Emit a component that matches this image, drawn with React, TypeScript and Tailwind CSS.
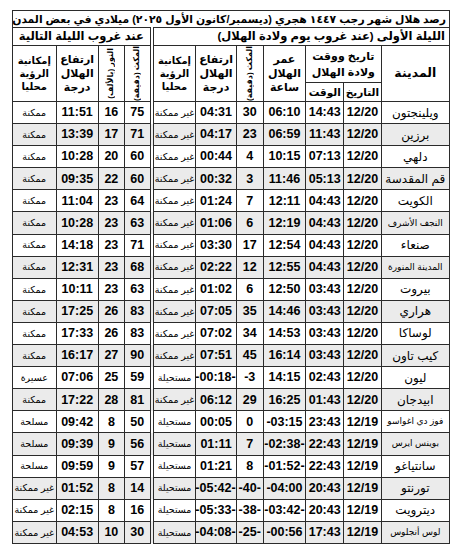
const ROWS: string[][] = [
  ["ويلينجتون", "12/20", "14:43", "06:10", "30", "04:31", "غير ممكنة", "75", "16", "11:51", "ممكنة"],
  ["برزين", "12/20", "11:43", "06:59", "23", "04:17", "غير ممكنة", "71", "17", "13:39", "ممكنة"],
  ["دلهي", "12/20", "07:13", "10:15", "4", "00:44", "غير ممكنة", "60", "20", "10:28", "ممكنة"],
  ["قم المقدسة", "12/20", "05:13", "11:46", "3", "00:32", "غير ممكنة", "60", "22", "09:35", "ممكنة"],
  ["الكويت", "12/20", "04:43", "12:11", "7", "01:24", "غير ممكنة", "64", "23", "11:04", "ممكنة"],
  ["النجف الأشرف", "12/20", "04:43", "12:19", "6", "01:06", "غير ممكنة", "63", "23", "10:28", "ممكنة"],
  ["صنعاء", "12/20", "04:43", "12:54", "17", "03:30", "غير ممكنة", "71", "23", "14:18", "ممكنة"],
  ["المدينة المنورة", "12/20", "04:43", "12:55", "12", "02:22", "غير ممكنة", "68", "23", "12:31", "ممكنة"],
  ["بيروت", "12/20", "03:43", "12:50", "6", "01:02", "غير ممكنة", "63", "23", "10:11", "ممكنة"],
  ["هراري", "12/20", "03:43", "14:46", "35", "07:05", "غير ممكنة", "83", "26", "17:25", "ممكنة"],
  ["لوساكا", "12/20", "03:43", "14:53", "34", "07:02", "غير ممكنة", "83", "26", "17:33", "ممكنة"],
  ["كيب تاون", "12/20", "03:43", "16:14", "45", "07:51", "غير ممكنة", "90", "27", "16:17", "ممكنة"],
  ["ليون", "12/20", "02:43", "14:15", "-3", "-00:18-", "مستحيلة", "59", "25", "07:06", "عسيرة"],
  ["ابيدجان", "12/20", "01:43", "16:25", "29", "06:12", "غير ممكنة", "81", "28", "17:22", "ممكنة"],
  ["فوز دي اغواسو", "12/19", "23:43", "-03:15", "0", "00:05", "مستحيلة", "50", "8", "09:42", "مسلحة"],
  ["بوينس ايرس", "12/19", "22:43", "-02:38-", "7", "01:11", "مستحيلة", "56", "9", "09:39", "مسلحة"],
  ["سانتياغو", "12/19", "22:43", "-01:52-", "8", "01:21", "مستحيلة", "57", "9", "09:59", "مسلحة"],
  ["تورنتو", "12/19", "20:43", "-04:00", "-40-", "-05:42-", "مستحيلة", "14", "8", "01:52", "غير ممكنة"],
  ["ديترويت", "12/19", "20:43", "-03:42-", "-38-", "-05:33-", "مستحيلة", "16", "8", "02:15", "غير ممكنة"],
  ["لوس أنجلوس", "12/19", "17:43", "-00:56", "-25-", "-04:08-", "مستحيلة", "30", "10", "04:53", "غير ممكنة"],
];

const SMALL = new Set(["النجف الأشرف", "المدينة المنورة", "فوز دي اغواسو", "بوينس ايرس", "لوس أنجلوس"]);

const cell = "border border-[#2b2b2b] text-center p-0 align-middle";

const Vertical = ({ text }: { text: string }) => (
  <div className="mx-auto flex justify-center">
    <span className="[writing-mode:vertical-rl] rotate-180 text-[8px] font-bold whitespace-nowrap leading-none">
      {text}
    </span>
  </div>
);

const ThreeLine = ({ a, b, c }: { a: string; b: string; c: string }) => (
  <div className="flex flex-col items-center gap-[3px] leading-none">
    <span>{a}</span>
    <span>{b}</span>
    <span>{c}</span>
  </div>
);

export default function App() {
  return (
    <div
      className="w-[457px] h-[556px] bg-white pt-[10px] pl-[12px] text-black"
      style={{ fontFamily: '"Liberation Sans", "DejaVu Sans", sans-serif' }}
    >
      <table dir="rtl" className="border-collapse table-fixed w-[438px]">
        <colgroup>
          <col className="w-[68px]" />
          <col className="w-[37px]" />
          <col className="w-[38px]" />
          <col className="w-[42px]" />
          <col className="w-[27px]" />
          <col className="w-[40px]" />
          <col className="w-[44px]" />
          <col className="w-[27px]" />
          <col className="w-[26px]" />
          <col className="w-[42px]" />
          <col className="w-[43px]" />
        </colgroup>
        <thead>
          <tr className="h-[17px]">
            <td colSpan={11} className={`${cell} text-right px-[3px] text-[10.8px] font-bold leading-none whitespace-nowrap overflow-hidden`}>
              رصد هلال شهر رجب ١٤٤٧ هجري (ديسمبر/كانون الأول ٢٠٢٥) ميلادي في بعض المدن
            </td>
          </tr>
          <tr className="h-[18px]">
            <td colSpan={7} className={`${cell} border-l-4 border-double text-right px-1 text-[11.5px] font-bold leading-none whitespace-nowrap`}>
              الليلة الأولى (عند غروب يوم ولادة الهلال)
            </td>
            <td colSpan={4} className={`${cell} text-[11.5px] font-bold leading-none whitespace-nowrap`}>
              عند غروب الليلة التالية
            </td>
          </tr>
          <tr className="h-[37px] text-[11px] font-bold">
            <td rowSpan={2} className={`${cell} text-[12.5px] leading-none`}>المدينة</td>
            <td colSpan={2} className={cell}>
              <div className="flex flex-col items-center gap-[5px] leading-none">
                <span>تاريخ ووقت</span>
                <span>ولادة الهلال</span>
              </div>
            </td>
            <td rowSpan={2} className={cell}>
              <ThreeLine a="عمر" b="الهلال" c="ساعة" />
            </td>
            <td rowSpan={2} className={cell}>
              <Vertical text="المكث (دقيقة)" />
            </td>
            <td rowSpan={2} className={cell}>
              <ThreeLine a="ارتفاع" b="الهلال" c="درجة" />
            </td>
            <td rowSpan={2} className={`${cell} border-l-4 border-double text-[10px]`}>
              <ThreeLine a="إمكانية" b="الرؤية" c="محليا" />
            </td>
            <td rowSpan={2} className={cell}>
              <Vertical text="المكث (دقيقة)" />
            </td>
            <td rowSpan={2} className={cell}>
              <Vertical text="النور (بالألف)" />
            </td>
            <td rowSpan={2} className={cell}>
              <ThreeLine a="ارتفاع" b="الهلال" c="درجة" />
            </td>
            <td rowSpan={2} className={`${cell} text-[10px]`}>
              <ThreeLine a="إمكانية" b="الرؤية" c="محليا" />
            </td>
          </tr>
          <tr className="h-[19px] text-[10.5px] font-bold leading-none">
            <td className={cell}>التاريخ</td>
            <td className={cell}>الوقت</td>
          </tr>
        </thead>
        <tbody>
          {ROWS.map((r, i) => (
            <tr key={r[0]} className={`h-[22.1px] ${i % 2 === 1 ? "bg-[#ebebeb]" : "bg-white"}`}>
              <td
                className={`${cell} whitespace-nowrap overflow-hidden leading-none ${
                  SMALL.has(r[0]) ? "text-[9px]" : "text-[12px]"
                }`}
              >
                {r[0]}
              </td>
              {r.slice(1, 6).map((v, j) => (
                <td key={j} className={`${cell} text-[12.5px] font-bold leading-none whitespace-nowrap`}>
                  <span dir="ltr">{v}</span>
                </td>
              ))}
              <td className={`${cell} border-l-4 border-double text-[9.5px] leading-none whitespace-nowrap`}>{r[6]}</td>
              {r.slice(7, 10).map((v, j) => (
                <td key={j} className={`${cell} text-[12.5px] font-bold leading-none whitespace-nowrap`}>
                  <span dir="ltr">{v}</span>
                </td>
              ))}
              <td className={`${cell} text-[9.5px] leading-none whitespace-nowrap`}>{r[10]}</td>
            </tr>
          ))}
        </tbody>
      </table>
    </div>
  );
}
